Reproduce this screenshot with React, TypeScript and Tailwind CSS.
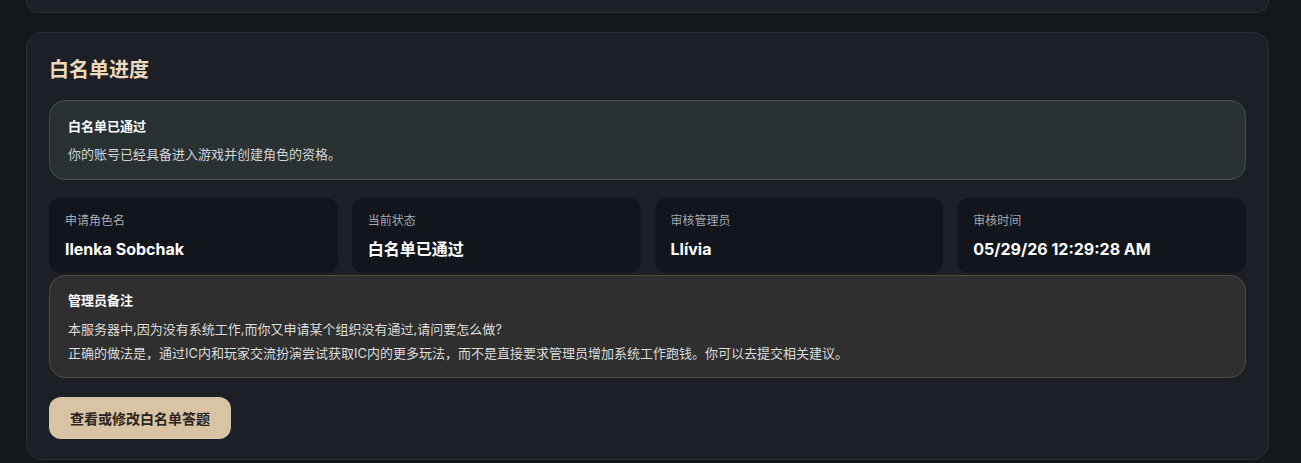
export default function App() {
  const stats = [
    { label: "申请角色名", value: "Ilenka Sobchak" },
    { label: "当前状态", value: "白名单已通过" },
    { label: "审核管理员", value: "Llívia" },
    { label: "审核时间", value: "05/29/26 12:29:28 AM" },
  ];

  return (
    <div
      className="min-h-screen bg-[#14171b] pl-[26px] pr-[32px]"
      style={{ fontFamily: '"Inter", "Noto Sans CJK SC", sans-serif' }}
    >
      {/* previous section, scrolled mostly out of view */}
      <div className="h-[13px] rounded-b-2xl border border-t-0 border-[#2a2e35] bg-[#1c1f26]" />

      <section className="mt-[19px] rounded-2xl border border-[#2a2e35] bg-[#1c1f26] px-[22px] pt-[23px] pb-[20px]">
        <h2 className="text-[20px] leading-[28px] font-bold text-[#ecdabd]">
          白名单进度
        </h2>

        <div className="mt-4 rounded-2xl border border-[#3b5647] bg-[#293133] px-[18px] pt-[15px] pb-[15px]">
          <div className="text-[13px] leading-[20px] font-bold text-white">
            白名单已通过
          </div>
          <p className="mt-2 text-[13px] leading-[20px] text-[#d2d4d6]">
            你的账号已经具备进入游戏并创建角色的资格。
          </p>
        </div>

        <div className="mt-[18px] grid grid-cols-4 gap-[14px]">
          {stats.map((s) => (
            <div
              key={s.label}
              className="h-[75px] rounded-xl bg-[#12151b] px-4 pt-[15px]"
            >
              <div className="text-[12px] leading-[16px] text-[#a4a7ad]">
                {s.label}
              </div>
              <div className="mt-2 text-[16px] leading-[24px] font-bold text-white">
                {s.value}
              </div>
            </div>
          ))}
        </div>

        <div className="mt-[2px] rounded-2xl border border-[#4f4a3a] bg-[#2f2f2f] px-[18px] pt-[14px] pb-[12px]">
          <div className="text-[13px] leading-[20px] font-bold text-white">
            管理员备注
          </div>
          <div className="mt-[7px] text-[13px] leading-[24px] text-[#dcdcdc]">
            <p>本服务器中,因为没有系统工作,而你又申请某个组织没有通过,请问要怎么做?</p>
            <p>
              正确的做法是，通过IC内和玩家交流扮演尝试获取IC内的更多玩法，而不是直接要求管理员增加系统工作跑钱。你可以去提交相关建议。
            </p>
          </div>
        </div>

        <button className="mt-[19px] h-[42px] w-[182px] rounded-xl bg-[#d8c3a4] text-[14px] font-bold text-[#2a2520]">
          查看或修改白名单答题
        </button>
      </section>
    </div>
  );
}
